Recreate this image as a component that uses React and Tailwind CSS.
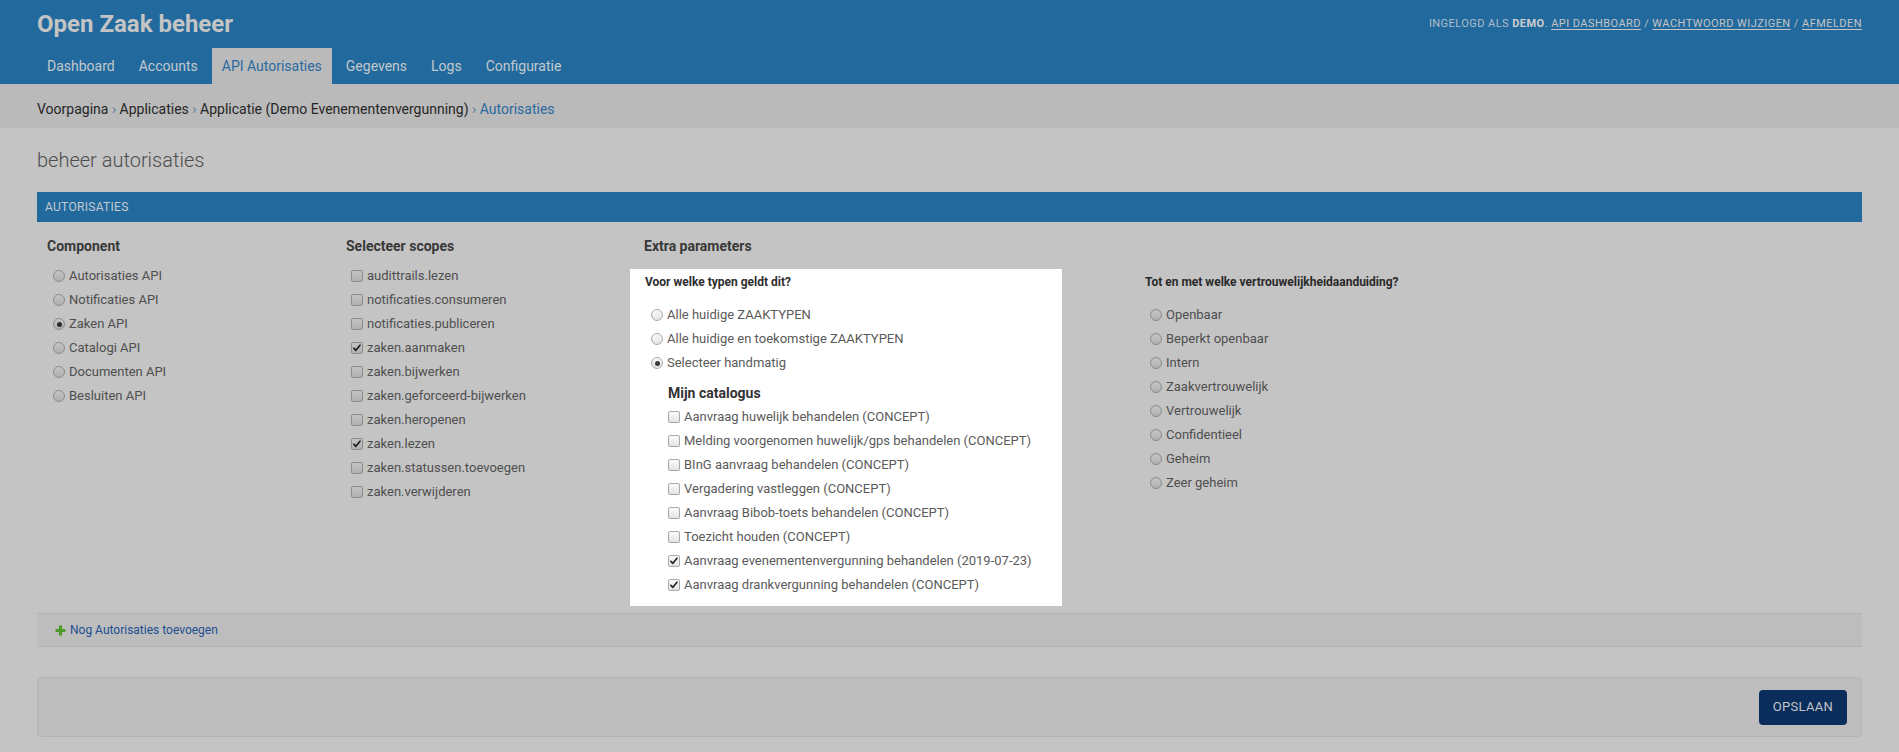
import React from "react";

function Radio({ checked, light }) {
  return (
    <span
      className={
        "relative inline-flex h-3 w-3 shrink-0 items-center justify-center rounded-full border " +
        (light
          ? "border-[#a9a9a9] bg-gradient-to-b from-[#fafafa] to-[#e4e4e4]"
          : "border-[#8c8c8c] bg-gradient-to-b from-[#c4c4c4] to-[#b0b0b0]")
      }
    >
      {checked && <span className={"h-[5px] w-[5px] rounded-full " + (light ? "bg-[#3a3a3a]" : "bg-[#2c2c2c]")} />}
    </span>
  );
}

function Checkbox({ checked, light }) {
  return (
    <span
      className={
        "relative inline-flex h-3 w-3 shrink-0 items-center justify-center rounded-[2px] border " +
        (light
          ? "border-[#a9a9a9] bg-gradient-to-b from-[#fafafa] to-[#e4e4e4]"
          : "border-[#8c8c8c] bg-gradient-to-b from-[#c4c4c4] to-[#b0b0b0]")
      }
    >
      {checked && (
        <svg viewBox="0 0 12 12" className="h-[10px] w-[10px]">
          <path d="M2.2 6.3 L4.6 8.8 L9.6 2.6" fill="none" stroke={light ? "#222" : "#1a1a1a"} strokeWidth="2" strokeLinecap="round" strokeLinejoin="round" />
        </svg>
      )}
    </span>
  );
}

function Item({ children, control }) {
  return (
    <li className="flex h-[24px] items-center gap-[4px]">
      {control}
      <span>{children}</span>
    </li>
  );
}

const components = ["Autorisaties API", "Notificaties API", "Zaken API", "Catalogi API", "Documenten API", "Besluiten API"];
const scopes = [
  ["audittrails.lezen", false],
  ["notificaties.consumeren", false],
  ["notificaties.publiceren", false],
  ["zaken.aanmaken", true],
  ["zaken.bijwerken", false],
  ["zaken.geforceerd-bijwerken", false],
  ["zaken.heropenen", false],
  ["zaken.lezen", true],
  ["zaken.statussen.toevoegen", false],
  ["zaken.verwijderen", false],
];
const typen = ["Alle huidige ZAAKTYPEN", "Alle huidige en toekomstige ZAAKTYPEN", "Selecteer handmatig"];
const catalogus = [
  ["Aanvraag huwelijk behandelen (CONCEPT)", false],
  ["Melding voorgenomen huwelijk/gps behandelen (CONCEPT)", false],
  ["BInG aanvraag behandelen (CONCEPT)", false],
  ["Vergadering vastleggen (CONCEPT)", false],
  ["Aanvraag Bibob-toets behandelen (CONCEPT)", false],
  ["Toezicht houden (CONCEPT)", false],
  ["Aanvraag evenementenvergunning behandelen (2019-07-23)", true],
  ["Aanvraag drankvergunning behandelen (CONCEPT)", true],
];
const vertrouwelijk = ["Openbaar", "Beperkt openbaar", "Intern", "Zaakvertrouwelijk", "Vertrouwelijk", "Confidentieel", "Geheim", "Zeer geheim"];

export default function App() {
  return (
    <div className="min-h-screen bg-[#c4c4c4] font-[Roboto,sans-serif] text-[13px] text-[#4f4f4f]">
      {/* Header */}
      <header className="bg-[#226a9d] px-[37px] pt-[10px]">
        <div className="flex h-[28px] items-center justify-between">
          <h1 className="text-[24px] font-bold leading-[28px] text-[#c4c4c4]">Open Zaak beheer</h1>
          <div className="text-[11px] uppercase tracking-[0.45px] text-[#aebccb]">
            Ingelogd als <strong className="font-bold text-[#cfcfcf]">demo</strong>.{" "}
            <a className="text-[#c4c4c4] underline underline-offset-2">API dashboard</a> /{" "}
            <a className="text-[#c4c4c4] underline underline-offset-2">Wachtwoord wijzigen</a> /{" "}
            <a className="text-[#c4c4c4] underline underline-offset-2">Afmelden</a>
          </div>
        </div>
        <nav className="mt-[10px] flex h-[36px] gap-[4px] text-[14px]">
          {["Dashboard", "Accounts", "API Autorisaties", "Gegevens", "Logs", "Configuratie"].map((t) => (
            <a
              key={t}
              className={
                "flex items-center px-[10px] " +
                (t === "API Autorisaties" ? "bg-[#bababa] text-[#2a6aa0]" : "text-[#c2c8ce]")
              }
            >
              {t}
            </a>
          ))}
        </nav>
      </header>

      {/* Breadcrumbs */}
      <div className="h-[44px] bg-[#bababa] px-[37px] pt-[17px] text-[14px] leading-[17px] text-[#262626]">
        <a>Voorpagina</a> <span className="text-[#5d7f9c]">›</span> <a>Applicaties</a>{" "}
        <span className="text-[#5d7f9c]">›</span> <a>Applicatie (Demo Evenementenvergunning)</a>{" "}
        <span className="text-[#5d7f9c]">›</span> <span className="text-[#2a6aa0]">Autorisaties</span>
      </div>

      <main className="px-[37px]">
        <h2 className="mt-[20px] text-[20px] font-light leading-[24px] text-[#4d4d4d]">beheer autorisaties</h2>

        <section className="mt-[20px]">
          <div className="flex h-[30px] items-center bg-[#226a9d] px-[8px] text-[12px] uppercase tracking-[0.3px] text-[#c2c9d0]">
            Autorisaties
          </div>

          <div className="flex pt-[14px]">
            {/* Component */}
            <div className="w-[299px] shrink-0 pl-[10px]">
              <h3 className="text-[14px] font-bold leading-[20px] text-[#383838]">Component</h3>
              <ul className="mt-[8px] pl-[6px]">
                {components.map((c) => (
                  <Item key={c} control={<Radio checked={c === "Zaken API"} />}>
                    {c}
                  </Item>
                ))}
              </ul>
            </div>

            {/* Scopes */}
            <div className="w-[298px] shrink-0 pl-[10px]">
              <h3 className="text-[14px] font-bold leading-[20px] text-[#383838]">Selecteer scopes</h3>
              <ul className="mt-[8px] pl-[5px]">
                {scopes.map(([s, c]) => (
                  <Item key={s} control={<Checkbox checked={c} />}>
                    {s}
                  </Item>
                ))}
              </ul>
            </div>

            {/* Extra parameters */}
            <div className="flex-1">
              <h3 className="pl-[10px] text-[14px] font-bold leading-[20px] text-[#383838]">Extra parameters</h3>
              <div className="mt-[13px] flex">
                <div className="-ml-[4px] w-[432px] shrink-0 bg-white px-[15px] pt-[5px] pb-[9px] text-[#5a5a5a]">
                  <h4 className="text-[12px] font-bold leading-[16px] text-[#2e2e2e]">Voor welke typen geldt dit?</h4>
                  <ul className="mt-[13px] pl-[6px]">
                    {typen.map((t) => (
                      <Item key={t} control={<Radio light checked={t === "Selecteer handmatig"} />}>
                        {t}
                      </Item>
                    ))}
                  </ul>
                  <div className="mt-[8px] pl-[23px]">
                    <h5 className="text-[14px] font-bold leading-[20px] text-[#333]">Mijn catalogus</h5>
                    <ul className="mt-[2px]">
                      {catalogus.map(([c, ch]) => (
                        <Item key={c} control={<Checkbox light checked={ch} />}>
                          {c}
                        </Item>
                      ))}
                    </ul>
                  </div>
                </div>

                <div className="ml-[83px] pt-[5px]">
                  <h4 className="text-[12px] font-bold leading-[16px] text-[#2a2a2a]">
                    Tot en met welke vertrouwelijkheidaanduiding?
                  </h4>
                  <ul className="mt-[13px] pl-[5px]">
                    {vertrouwelijk.map((v) => (
                      <Item key={v} control={<Radio />}>
                        {v}
                      </Item>
                    ))}
                  </ul>
                </div>
              </div>
            </div>
          </div>
        </section>

        {/* Add row */}
        <div className="mt-[7px] flex h-[34px] items-center gap-[4px] border-y border-[#b3b3b3] bg-[#bdbdbd] pl-[18px] text-[12px] text-[#1e4f91]">
          <svg viewBox="0 0 10 10" className="h-[11px] w-[11px]">
            <path d="M3.6 0.5h2.8v3.1h3.1v2.8H6.4v3.1H3.6V6.4H0.5V3.6h3.1z" fill="#4f9a28" />
          </svg>
          <a>Nog Autorisaties toevoegen</a>
        </div>

        {/* Submit row */}
        <div className="mt-[30px] flex h-[60px] items-center justify-end rounded-[4px] border border-[#b5b5b5] bg-[#bdbdbd] pr-[14px]">
          <button className="h-[35px] w-[88px] rounded-[4px] bg-[#0b2d5b] text-[13px] uppercase tracking-[0.3px] text-[#c0c4c8]">
            Opslaan
          </button>
        </div>
      </main>
    </div>
  );
}
